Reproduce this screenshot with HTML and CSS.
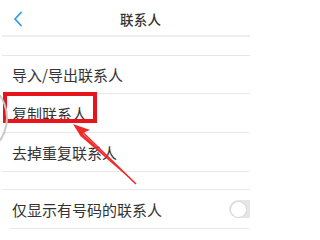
FILE: index.html
```html
<!DOCTYPE html>
<html lang="zh-CN">
<head>
<meta charset="utf-8">
<link rel="stylesheet" href="styles.css">
</head>
<body>
<div class="page">
  <header class="bar">
    <svg class="back" width="10" height="16" viewBox="0 0 10 16"><path d="M8 1.5 L2 8 L8 14.5" fill="none" stroke="#2f9be6" stroke-width="1.8" stroke-linecap="round" stroke-linejoin="round"/></svg>
    <div class="title">联系人</div>
  </header>
  <div class="gap"></div>
  <ul class="group">
    <li class="row">导入/导出联系人</li>
    <li class="row">复制联系人</li>
    <li class="row">去掉重复联系人</li>
  </ul>
  <div class="gap small"></div>
  <ul class="group">
    <li class="row inset">
      <span>仅显示有号码的联系人</span>
      <span class="toggle"><span class="knob"></span></span>
    </li>
  </ul>
  <div class="highlight"></div>
  <div class="arc"></div>
  <svg class="arrow" width="250" height="231" viewBox="0 0 250 231">
    <path d="M136 184 L83 134 L81 136.5 Z" fill="#ee2a2a"/>
    <path d="M84 133.5 L136 184" stroke="#ee2a2a" stroke-width="1.6"/>
    <path d="M73 124 L90 130 L85 132 L81 137 Z" fill="#ee2a2a"/>
  </svg>
</div>
</body>
</html>
```

FILE: styles.css
```css
html, body {
  margin: 0;
  padding: 0;
  background: #fff;
}
.page {
  position: relative;
  width: 250px;
  height: 231px;
  overflow: hidden;
  font-family: "Noto Sans CJK SC", "Noto Sans", sans-serif;
  color: #333;
}
.bar {
  height: 35px;
  border-bottom: 2px solid #eeeeee;
  margin-left: 2px;
  display: flex;
  align-items: center;
  position: relative;
}
.back {
  margin-left: 11px;
  margin-top: 2px;
}
.title {
  position: absolute;
  left: 118px;
  top: 9px;
  font-size: 13.5px;
  font-weight: 500;
  color: #333;
  letter-spacing: 0.3px;
}
.gap {
  height: 18px;
}
.gap.small {
  height: 17px;
}
.group {
  list-style: none;
  margin: 0 0 0 2px;
  padding: 0;
  border-top: 1px solid #e8e8e8;
}
.row {
  height: 38px;
  border-bottom: 1px solid #e8e8e8;
  display: flex;
  align-items: center;
  justify-content: space-between;
  padding-left: 10px;
  font-size: 15px;
  line-height: 1;
  color: #333;
}
.row:first-child {
  height: 37px;
}
.row.inset {
  margin-left: 8px;
  padding-left: 2px;
  height: 38px;
}
.toggle {
  width: 40px;
  height: 18px;
  border-radius: 9px;
  background: #e6e6e6;
  margin-right: -20px;
  display: flex;
  align-items: center;
  padding-left: 1px;
}
.knob {
  width: 15px;
  height: 15px;
  border-radius: 50%;
  background: #fff;
  border: 1px solid #d6d6d6;
}
.highlight {
  position: absolute;
  left: 3px;
  top: 92px;
  width: 86px;
  height: 23px;
  border: 4px solid #e8141b;
}
.arc {
  position: absolute;
  left: -62px;
  top: 80px;
  width: 66px;
  height: 72px;
  border-radius: 50%;
  border: 2px solid #c8c8c8;
  filter: blur(0.6px);
}
.arrow {
  position: absolute;
  left: 0;
  top: 0;
}
```
